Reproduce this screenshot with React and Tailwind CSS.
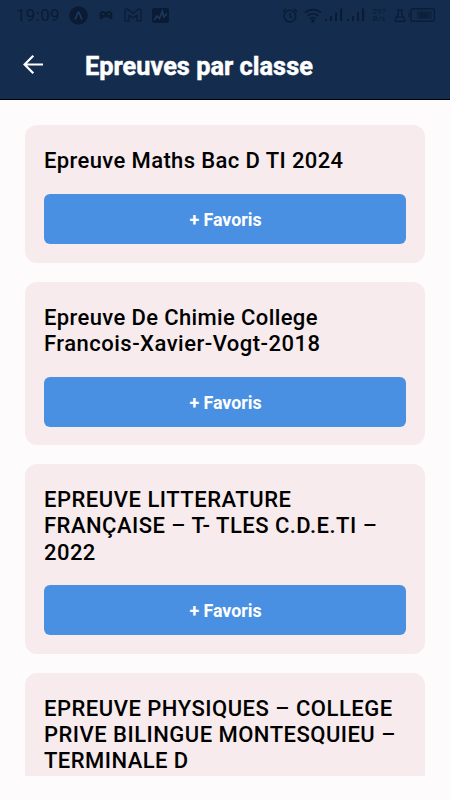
const exams = [
  {
    lines: [{ text: 'Epreuve Maths Bac D TI 2024', tracking: 'tracking-[0.390px]' }],
  },
  {
    lines: [
      { text: 'Epreuve De Chimie College', tracking: 'tracking-[0.380px]' },
      { text: 'Francois-Xavier-Vogt-2018', tracking: 'tracking-[0.490px]' },
    ],
  },
  {
    lines: [
      { text: 'EPREUVE LITTERATURE', tracking: 'tracking-[0.520px]' },
      { text: 'FRANÇAISE – T- TLES C.D.E.TI –', tracking: 'tracking-[0.480px]' },
      { text: '2022', tracking: 'tracking-[0.450px]' },
    ],
  },
  {
    lines: [
      { text: 'EPREUVE PHYSIQUES – COLLEGE', tracking: 'tracking-[0.510px]' },
      { text: 'PRIVE BILINGUE MONTESQUIEU –', tracking: 'tracking-[0.480px]' },
      { text: 'TERMINALE D', tracking: 'tracking-[0.450px]' },
    ],
    titleOnly: true,
  },
];

function SignalBars() {
  return (
    <svg width="18" height="14" viewBox="0 0 18 14" fill="currentColor">
      <path d="M0 11h2v2H0zM5 8h2v5H5zM10 4.500h2v8.500h-2zM15 0.500h2.200v12.500H15z" />
    </svg>
  );
}

function StatusBar() {
  return (
    <div className="flex h-[30px] items-center pl-4 pr-[15px] text-[#0a1b33]">
      <span className="w-[53px] text-[17px] leading-[30px] tracking-[0.3px]">19:09</span>
      <svg className="h-[19px] w-[19px]" viewBox="0 0 19 19">
        <circle cx="9.500" cy="9.500" r="9.300" fill="currentColor" />
        <path d="M6.300 12.800C7.800 11 8.500 6 9.500 6S11.200 11 12.700 12.800" fill="none" stroke="#1b3a60" strokeWidth="1.700" strokeLinecap="round" />
      </svg>
      <svg className="ml-[11px] h-[10px] w-[14px]" viewBox="0 0 14 10">
        <path d="M3.500 1C5 1 6 2 7 2s2-1 3.500-1C13 1 14 4.500 13.200 8.500c-.4 1.300-2 1-3-.2C9 6.700 5 6.700 3.800 8.300c-1 1.200-2.600 1.500-3 .2C0 4.500 1 1 3.500 1Z" fill="currentColor" />
        <path d="M3 4.200h2.400M8.800 4.200h2.300" stroke="#173557" strokeWidth="1.200" />
      </svg>
      <svg className="ml-[11px] h-[14px] w-[18px]" viewBox="0 0 18 14" fill="none" stroke="currentColor" strokeWidth="1.200">
        <path d="M1 2.500C1 .8 2.800.6 4 1.500l5 4 5-4c1.200-.9 3-.7 3 1V13h-4V7L9 10 5 7v6H1Z" strokeLinejoin="round" />
      </svg>
      <svg className="ml-[10px] h-[15px] w-[17px]" viewBox="0 0 17 15">
        <rect width="17" height="15" rx="2" fill="currentColor" />
        <path d="m2 12 3-4 2.500 2.500L10.300 3l1.500 6L15 5.500" fill="none" stroke="#1b3a60" strokeWidth="1.500" />
      </svg>
      <div className="ml-auto flex items-center">
        <svg className="h-[15px] w-[16px]" viewBox="0 0 16 15" fill="none" stroke="currentColor" strokeWidth="1.400">
          <circle cx="8" cy="8.200" r="5.800" />
          <path d="M8 5v3.500l2.200 1.300M.8 3.800 4 1M15.200 3.800 12 1" />
        </svg>
        <svg className="ml-[6px] h-[15px] w-[18px]" viewBox="0 0 18 15" fill="none" stroke="currentColor" strokeWidth="1.600">
          <path d="M1 4.800c4.300-4.300 11.700-4.300 16 0M3.500 8c3-3 8-3 11 0M6.200 10.800c1.600-1.500 4-1.500 5.600 0" />
          <circle cx="9" cy="13" r="1" fill="currentColor" />
        </svg>
        <div className="ml-[3px] flex gap-[3.500px]">
          <SignalBars />
          <SignalBars />
        </div>
        <div className="ml-[7.500px] w-[14px] text-center text-[8px] leading-[7.500px] text-[#0a1b33]">
          <div>297</div>
          <div>B/s</div>
        </div>
        <svg className="ml-[8px] h-[13px] w-[12px]" viewBox="0 0 12 13" fill="none" stroke="currentColor" strokeWidth="1.200">
          <path d="M3.500.8h5M4.300.8v4L1 11c-.4 1 .1 1.300 1 1.300h8c.9 0 1.400-.3 1-1.300L7.700 4.800v-4M3 8h6" />
        </svg>
        <svg className="ml-[2px] h-[14px] w-[27px]" viewBox="0 0 27 14" fill="none" stroke="currentColor" strokeWidth="1.200">
          <path d="M4.500.8h20.300c1 0 1.500.5 1.500 1.500v9.400c0 1-.5 1.500-1.500 1.500H4.500c-1 0-1.500-.5-1.500-1.500V2.300c0-1 .5-1.500 1.500-1.500ZM1 4.500v5" />
          <rect x="9" y="3" width="15" height="8" fill="currentColor" stroke="none" opacity=".5" />
          <text x="11" y="10" fontSize="8" fill="currentColor" stroke="none">58</text>
        </svg>
      </div>
    </div>
  );
}

function ExamCard({ lines, titleOnly }) {
  return (
    <article className="shrink-0 rounded-[12px] bg-[#f7ebed] px-[18.700px] pb-[18.500px] pt-[23px]">
      <h2 className="mb-[19.600px] whitespace-nowrap text-[22px] font-medium leading-[26.200px] text-black">
        {lines.map(({ text, tracking }) => (
          <span key={text} className={`block ${tracking}`}>{text}</span>
        ))}
      </h2>
      {!titleOnly && (
        <button className="flex h-[50px] w-full items-center justify-center rounded-[6px] bg-[#4a90e2] pl-px pt-[2.500px] text-[17.800px] font-bold text-white">
          + Favoris
        </button>
      )}
    </article>
  );
}

export default function App() {
  return (
    <div className="flex h-[800px] w-[450px] flex-col overflow-hidden bg-[#fefbfc] font-['Roboto',sans-serif]">
      <header className="h-[100px] shrink-0 border-b border-black bg-[#142d4e]">
        <StatusBar />
        <div className="flex h-[70px] items-center pl-[22px]">
          <svg className="h-[20px] w-[22px]" viewBox="0 0 22 20" fill="none" stroke="white" strokeWidth="2.200">
            <path d="M21 9.500H2.500M11.300.8l-8.700 8.700 8.700 8.700" />
          </svg>
          <h1 className="ml-[41px] pt-[3px] text-[25.300px] font-bold leading-[30px] tracking-[0.030px] text-white [-webkit-text-stroke:0.5px_white]">
            Epreuves par classe
          </h1>
        </div>
      </header>
      <main className="flex h-[676px] shrink-0 flex-col gap-[19px] overflow-hidden px-[25.300px] pt-[25.400px]">
        {exams.map((exam) => (
          <ExamCard key={exam.lines[0].text} {...exam} />
        ))}
      </main>
    </div>
  );
}
